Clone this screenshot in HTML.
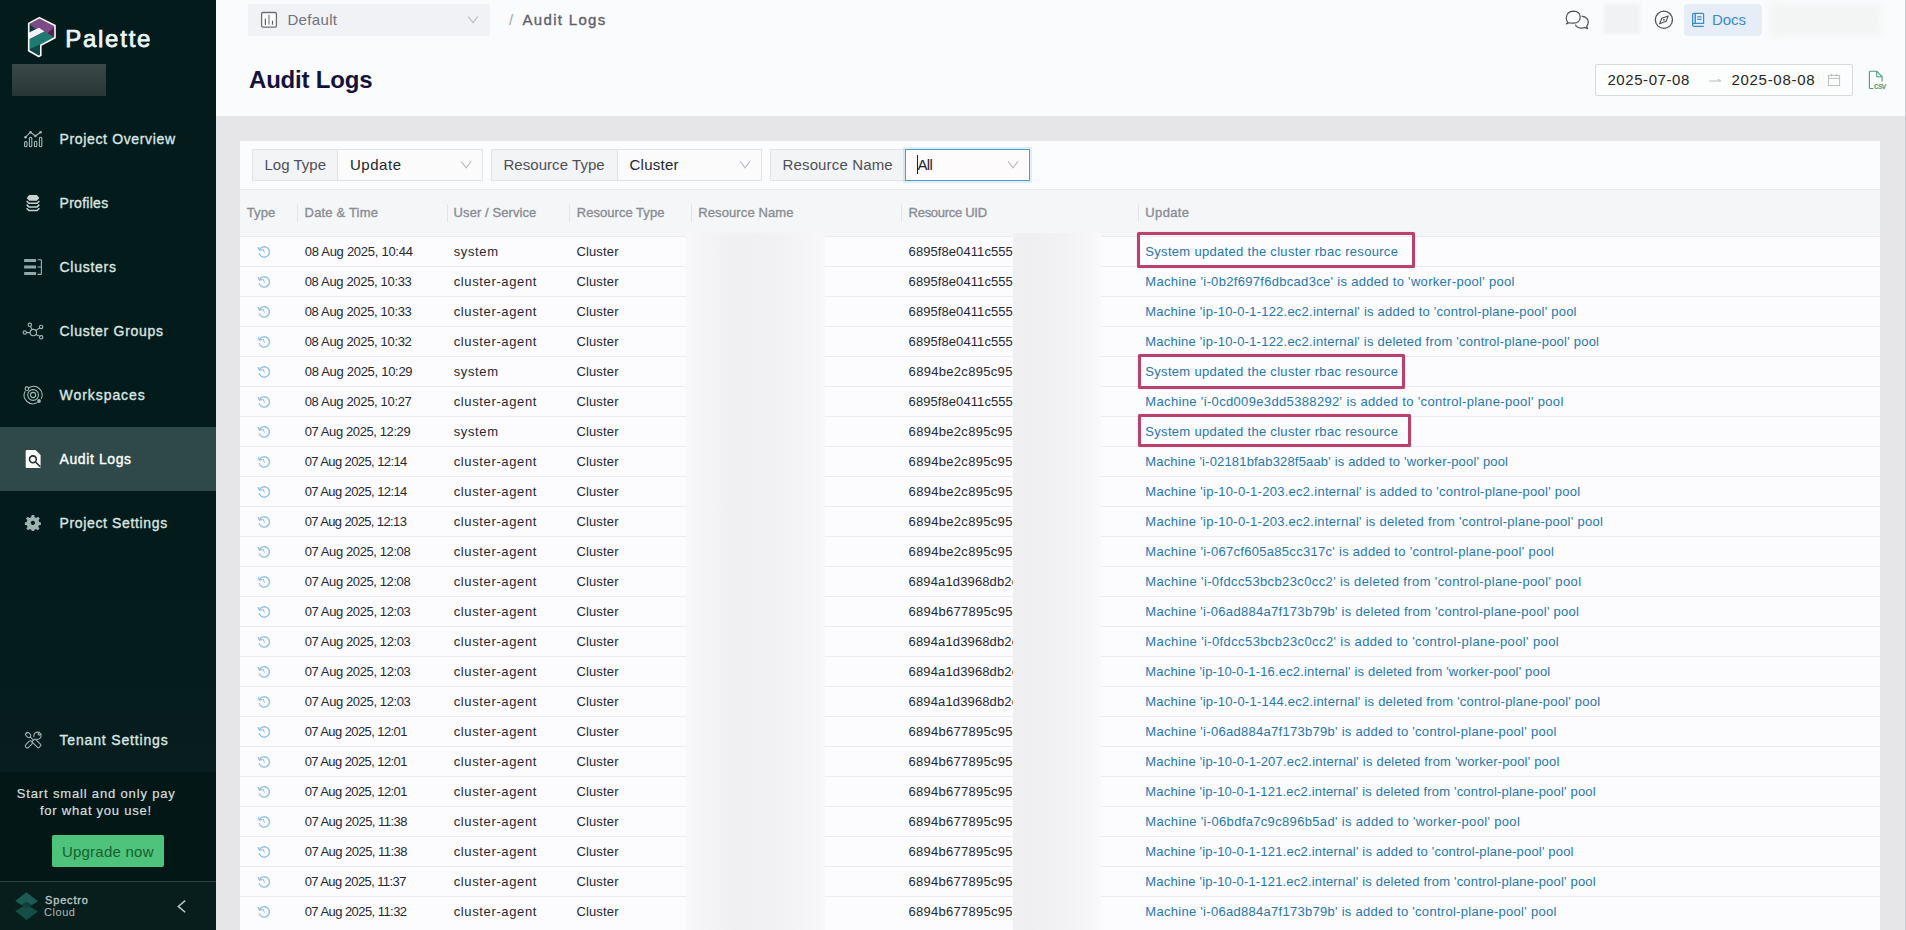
<!DOCTYPE html>
<html><head><meta charset="utf-8">
<style>
*{box-sizing:border-box;margin:0;padding:0}
html,body{width:1906px;height:930px;overflow:hidden;font-family:"Liberation Sans",sans-serif;background:#e6e6e9;position:relative}
.b{position:absolute}
.t{position:absolute;white-space:pre;line-height:1;font-family:"Liberation Sans",sans-serif}
svg{position:absolute}
.rl{position:absolute;left:240px;width:1640px;height:1px;background:#ececef}
</style></head><body>
<!-- sidebar -->
<div class="b" style="left:0;top:0;width:216px;height:930px;background:#031b1a"></div>
<div class="b" style="left:0;top:540px;width:216px;height:232px;background:linear-gradient(180deg,#031b1a 0%,#051c1c 50%,#081e1e 100%)"></div>
<div class="b" style="left:0;top:772px;width:216px;height:109px;background:#021716"></div>
<div class="b" style="left:0;top:881px;width:216px;height:1px;background:#2c4142"></div>
<div class="b" style="left:0;top:882px;width:216px;height:48px;background:#071e1d"></div>
<div class="b" style="left:0;top:427px;width:216px;height:64px;background:#2f4949"></div>
<div class="b" style="left:12px;top:64px;width:94px;height:32px;background:linear-gradient(180deg,#3a4848,#283636);filter:blur(0.6px)"></div>
<div class="b" style="left:52px;top:835px;width:112px;height:32px;background:#4ec37b;border-radius:2px"></div>

<!-- header -->
<div class="b" style="left:216px;top:0;width:1690px;height:116px;background:#fafbfc"></div>
<div class="b" style="left:248px;top:4px;width:242px;height:32px;background:#f0f2f5"></div>
<div class="b" style="left:1604px;top:4px;width:36px;height:30px;background:#f0f2f3;filter:blur(1.5px)"></div>
<div class="b" style="left:1684px;top:4px;width:78px;height:32px;background:#e6edf7;border-radius:4px"></div>
<div class="b" style="left:1770px;top:4px;width:112px;height:32px;background:#f3f4f4;filter:blur(3px)"></div>
<div class="b" style="left:1595px;top:64px;width:258px;height:32px;background:#fcfdfd;border:1px solid #d6d9dd;border-radius:2px"></div>
<div class="b" style="left:1905px;top:0;width:1px;height:930px;background:#c9cacd"></div>

<!-- card -->
<div class="b" style="left:240px;top:141px;width:1640px;height:789px;background:#fcfcfe"></div>
<div class="b" style="left:240px;top:141px;width:1640px;height:48px;background:#fbfcfd"></div>
<div class="b" style="left:240px;top:189px;width:1640px;height:1px;background:#e7e8eb"></div>
<div class="b" style="left:240px;top:190px;width:1640px;height:46px;background:#f5f6f8"></div>
<!-- filter groups -->
<div class="b" style="left:252px;top:149px;width:231px;height:32px;border:1px solid #e2e3e6;background:#fbfbfc"></div>
<div class="b" style="left:253px;top:150px;width:85px;height:30px;background:#f3f4f6;border-right:1px solid #e2e3e6"></div>
<div class="b" style="left:491px;top:149px;width:271px;height:32px;border:1px solid #e2e3e6;background:#fbfbfc"></div>
<div class="b" style="left:492px;top:150px;width:126px;height:30px;background:#f3f4f6;border-right:1px solid #e2e3e6"></div>
<div class="b" style="left:770px;top:149px;width:260px;height:32px;border:1px solid #e2e3e6;background:#fbfbfc"></div>
<div class="b" style="left:771px;top:150px;width:134px;height:30px;background:#f3f4f6"></div>
<div class="b" style="left:905px;top:149px;width:125px;height:32px;border:1px solid #4a9bd6;background:#fdfbfb;box-shadow:0 0 0 2px rgba(74,155,214,0.15)"></div>
<div class="b" style="left:917px;top:155px;width:1.2px;height:19px;background:#222"></div>
<!-- header separators -->
<div class="b" style="left:297px;top:204px;width:1px;height:18px;background:#e3e4e7"></div>
<div class="b" style="left:447px;top:204px;width:1px;height:18px;background:#e3e4e7"></div>
<div class="b" style="left:569px;top:204px;width:1px;height:18px;background:#e3e4e7"></div>
<div class="b" style="left:691px;top:204px;width:1px;height:18px;background:#e3e4e7"></div>
<div class="b" style="left:901px;top:204px;width:1px;height:18px;background:#e3e4e7"></div>
<div class="b" style="left:1138px;top:204px;width:1px;height:18px;background:#e3e4e7"></div>
<div class="b" style="left:240px;top:236px;width:1640px;height:1px;background:#e9eaed"></div>

<div class='t' style='left:65.2px;top:26.5px;font-size:24px;font-weight:400;-webkit-text-stroke:0.75px #eef7f6;color:#eef7f6;letter-spacing:1.747px;'>Palette</div>
<div class='t' style='left:59.5px;top:132.1px;font-size:14px;font-weight:400;-webkit-text-stroke:0.35px #dae5e2;color:#dae5e2;letter-spacing:0.646px;'>Project Overview</div>
<div class='t' style='left:59.5px;top:196.1px;font-size:14px;font-weight:400;-webkit-text-stroke:0.35px #dae5e2;color:#dae5e2;letter-spacing:0.288px;'>Profiles</div>
<div class='t' style='left:59.5px;top:260.1px;font-size:14px;font-weight:400;-webkit-text-stroke:0.35px #dae5e2;color:#dae5e2;letter-spacing:0.720px;'>Clusters</div>
<div class='t' style='left:59.5px;top:324.1px;font-size:14px;font-weight:400;-webkit-text-stroke:0.35px #dae5e2;color:#dae5e2;letter-spacing:0.726px;'>Cluster Groups</div>
<div class='t' style='left:59.5px;top:388.1px;font-size:14px;font-weight:400;-webkit-text-stroke:0.35px #dae5e2;color:#dae5e2;letter-spacing:0.947px;'>Workspaces</div>
<div class='t' style='left:59.5px;top:452.1px;font-size:14px;font-weight:400;-webkit-text-stroke:0.35px #ffffff;color:#ffffff;letter-spacing:0.603px;'>Audit Logs</div>
<div class='t' style='left:59.5px;top:516.1px;font-size:14px;font-weight:400;-webkit-text-stroke:0.35px #dae5e2;color:#dae5e2;letter-spacing:0.643px;'>Project Settings</div>
<div class='t' style='left:59.5px;top:733.3px;font-size:14px;font-weight:400;-webkit-text-stroke:0.35px #dae5e2;color:#dae5e2;letter-spacing:0.835px;'>Tenant Settings</div>
<div class='t' style='left:16.8px;top:786.6px;font-size:13px;font-weight:400;-webkit-text-stroke:0.2px #d4dedc;color:#d4dedc;letter-spacing:0.838px;'>Start small and only pay</div>
<div class='t' style='left:40.0px;top:804.2px;font-size:13px;font-weight:400;-webkit-text-stroke:0.2px #d4dedc;color:#d4dedc;letter-spacing:0.750px;'>for what you use!</div>
<div class='t' style='left:61.9px;top:843.9px;font-size:15px;font-weight:400;color:#17602f;letter-spacing:0.237px;'>Upgrade now</div>
<div class='t' style='left:45.0px;top:895.3px;font-size:11px;font-weight:400;-webkit-text-stroke:0.35px #b9c7c5;color:#b9c7c5;letter-spacing:0.846px;'>Spectro</div>
<div class='t' style='left:44.0px;top:906.7px;font-size:11px;font-weight:400;color:#aebbb9;letter-spacing:0.562px;'>Cloud</div>
<div class='t' style='left:287.4px;top:12.2px;font-size:15px;font-weight:400;color:#6f737d;letter-spacing:0.345px;'>Default</div>
<div class='t' style='left:509.0px;top:12.1px;font-size:15px;font-weight:400;color:#a3a6ad;letter-spacing:0.000px;'>/</div>
<div class='t' style='left:522.5px;top:11.9px;font-size:15px;font-weight:400;-webkit-text-stroke:0.35px #5c606b;color:#5c606b;letter-spacing:1.312px;'>Audit Logs</div>
<div class='t' style='left:249.0px;top:67.7px;font-size:24px;font-weight:700;color:#14123a;letter-spacing:-0.201px;'>Audit Logs</div>
<div class='t' style='left:1712.0px;top:12.1px;font-size:15px;font-weight:400;color:#3a8bc9;letter-spacing:-0.062px;'>Docs</div>
<div class='t' style='left:1607.4px;top:71.8px;font-size:15px;font-weight:400;color:#262626;letter-spacing:0.585px;'>2025-07-08</div>
<div class='t' style='left:1731.4px;top:71.8px;font-size:15px;font-weight:400;color:#262626;letter-spacing:0.718px;'>2025-08-08</div>
<div class='t' style='left:264.5px;top:157.1px;font-size:15px;font-weight:400;color:#4e5059;letter-spacing:0.007px;'>Log Type</div>
<div class='t' style='left:350.0px;top:157.1px;font-size:15px;font-weight:400;color:#22242e;letter-spacing:0.525px;'>Update</div>
<div class='t' style='left:503.4px;top:157.1px;font-size:15px;font-weight:400;color:#4e5059;letter-spacing:0.056px;'>Resource Type</div>
<div class='t' style='left:629.5px;top:157.1px;font-size:15px;font-weight:400;color:#22242e;letter-spacing:0.247px;'>Cluster</div>
<div class='t' style='left:782.5px;top:157.1px;font-size:15px;font-weight:400;color:#4e5059;letter-spacing:0.151px;'>Resource Name</div>
<div class='t' style='left:917.5px;top:157.1px;font-size:15px;font-weight:400;color:#22242e;letter-spacing:-0.636px;'>All</div>
<div class='t' style='left:246.7px;top:206.3px;font-size:13px;font-weight:400;-webkit-text-stroke:0.35px #8a8c94;color:#8a8c94;letter-spacing:0.138px;'>Type</div>
<div class='t' style='left:304.6px;top:206.3px;font-size:13px;font-weight:400;-webkit-text-stroke:0.35px #8a8c94;color:#8a8c94;letter-spacing:0.177px;'>Date &amp; Time</div>
<div class='t' style='left:453.6px;top:206.3px;font-size:13px;font-weight:400;-webkit-text-stroke:0.35px #8a8c94;color:#8a8c94;letter-spacing:0.081px;'>User / Service</div>
<div class='t' style='left:576.8px;top:206.3px;font-size:13px;font-weight:400;-webkit-text-stroke:0.35px #8a8c94;color:#8a8c94;letter-spacing:0.033px;'>Resource Type</div>
<div class='t' style='left:698.3px;top:206.3px;font-size:13px;font-weight:400;-webkit-text-stroke:0.35px #8a8c94;color:#8a8c94;letter-spacing:0.097px;'>Resource Name</div>
<div class='t' style='left:908.6px;top:206.3px;font-size:13px;font-weight:400;-webkit-text-stroke:0.35px #8a8c94;color:#8a8c94;letter-spacing:-0.286px;'>Resource UID</div>
<div class='t' style='left:1145.3px;top:206.3px;font-size:13px;font-weight:400;-webkit-text-stroke:0.35px #8a8c94;color:#8a8c94;letter-spacing:0.356px;'>Update</div>
<div class='rl' style='top:236px'></div>
<svg class='hist' style='left:257px;top:245px' width='14' height='14' viewBox='0 0 14 14'><path d='M2.6 4.6 A5.2 5.2 0 1 1 2.3 8.6' fill='none' stroke='#8fbde3' stroke-width='1.3' stroke-linecap='round'/><path d='M1.4 2.6 L2.4 5.2 L5 4.6' fill='none' stroke='#8fbde3' stroke-width='1.3' stroke-linecap='round' stroke-linejoin='round'/><path d='M6.2 4.4 L7.4 7.4' stroke='#8fbde3' stroke-width='1' stroke-linecap='round'/></svg>
<div class='t' style='left:304.7px;top:245.0px;font-size:13px;color:#262833;letter-spacing:-0.269px;'>08 Aug 2025, 10:44</div>
<div class='t' style='left:453.7px;top:245.0px;font-size:13px;color:#262833;letter-spacing:0.629px;'>system</div>
<div class='t' style='left:576.4px;top:245.0px;font-size:13px;color:#262833;letter-spacing:0.152px;'>Cluster</div>
<div class='t' style='left:908.6px;top:245.0px;font-size:13px;color:#262833;letter-spacing:0.076px;width:104.4px;overflow:hidden'>6895f8e0411c5559</div>
<div class='t' style='left:1145.3px;top:245.0px;font-size:13px;color:#2776ac;letter-spacing:0.307px;'>System updated the cluster rbac resource</div>
<div class='rl' style='top:266px'></div>
<svg class='hist' style='left:257px;top:275px' width='14' height='14' viewBox='0 0 14 14'><path d='M2.6 4.6 A5.2 5.2 0 1 1 2.3 8.6' fill='none' stroke='#8fbde3' stroke-width='1.3' stroke-linecap='round'/><path d='M1.4 2.6 L2.4 5.2 L5 4.6' fill='none' stroke='#8fbde3' stroke-width='1.3' stroke-linecap='round' stroke-linejoin='round'/><path d='M6.2 4.4 L7.4 7.4' stroke='#8fbde3' stroke-width='1' stroke-linecap='round'/></svg>
<div class='t' style='left:304.7px;top:275.0px;font-size:13px;color:#262833;letter-spacing:-0.334px;'>08 Aug 2025, 10:33</div>
<div class='t' style='left:453.7px;top:275.0px;font-size:13px;color:#262833;letter-spacing:0.629px;'>cluster-agent</div>
<div class='t' style='left:576.4px;top:275.0px;font-size:13px;color:#262833;letter-spacing:0.152px;'>Cluster</div>
<div class='t' style='left:908.6px;top:275.0px;font-size:13px;color:#262833;letter-spacing:0.076px;width:104.4px;overflow:hidden'>6895f8e0411c5559</div>
<div class='t' style='left:1145.3px;top:275.0px;font-size:13px;color:#2776ac;letter-spacing:0.306px;'>Machine &#x27;i-0b2f697f6dbcad3ce&#x27; is added to &#x27;worker-pool&#x27; pool</div>
<div class='rl' style='top:296px'></div>
<svg class='hist' style='left:257px;top:305px' width='14' height='14' viewBox='0 0 14 14'><path d='M2.6 4.6 A5.2 5.2 0 1 1 2.3 8.6' fill='none' stroke='#8fbde3' stroke-width='1.3' stroke-linecap='round'/><path d='M1.4 2.6 L2.4 5.2 L5 4.6' fill='none' stroke='#8fbde3' stroke-width='1.3' stroke-linecap='round' stroke-linejoin='round'/><path d='M6.2 4.4 L7.4 7.4' stroke='#8fbde3' stroke-width='1' stroke-linecap='round'/></svg>
<div class='t' style='left:304.7px;top:305.0px;font-size:13px;color:#262833;letter-spacing:-0.334px;'>08 Aug 2025, 10:33</div>
<div class='t' style='left:453.7px;top:305.0px;font-size:13px;color:#262833;letter-spacing:0.629px;'>cluster-agent</div>
<div class='t' style='left:576.4px;top:305.0px;font-size:13px;color:#262833;letter-spacing:0.152px;'>Cluster</div>
<div class='t' style='left:908.6px;top:305.0px;font-size:13px;color:#262833;letter-spacing:0.076px;width:104.4px;overflow:hidden'>6895f8e0411c5559</div>
<div class='t' style='left:1145.3px;top:305.0px;font-size:13px;color:#2776ac;letter-spacing:0.227px;'>Machine &#x27;ip-10-0-1-122.ec2.internal&#x27; is added to &#x27;control-plane-pool&#x27; pool</div>
<div class='rl' style='top:326px'></div>
<svg class='hist' style='left:257px;top:335px' width='14' height='14' viewBox='0 0 14 14'><path d='M2.6 4.6 A5.2 5.2 0 1 1 2.3 8.6' fill='none' stroke='#8fbde3' stroke-width='1.3' stroke-linecap='round'/><path d='M1.4 2.6 L2.4 5.2 L5 4.6' fill='none' stroke='#8fbde3' stroke-width='1.3' stroke-linecap='round' stroke-linejoin='round'/><path d='M6.2 4.4 L7.4 7.4' stroke='#8fbde3' stroke-width='1' stroke-linecap='round'/></svg>
<div class='t' style='left:304.7px;top:335.0px;font-size:13px;color:#262833;letter-spacing:-0.334px;'>08 Aug 2025, 10:32</div>
<div class='t' style='left:453.7px;top:335.0px;font-size:13px;color:#262833;letter-spacing:0.629px;'>cluster-agent</div>
<div class='t' style='left:576.4px;top:335.0px;font-size:13px;color:#262833;letter-spacing:0.152px;'>Cluster</div>
<div class='t' style='left:908.6px;top:335.0px;font-size:13px;color:#262833;letter-spacing:0.076px;width:104.4px;overflow:hidden'>6895f8e0411c5559</div>
<div class='t' style='left:1145.3px;top:335.0px;font-size:13px;color:#2776ac;letter-spacing:0.226px;'>Machine &#x27;ip-10-0-1-122.ec2.internal&#x27; is deleted from &#x27;control-plane-pool&#x27; pool</div>
<div class='rl' style='top:356px'></div>
<svg class='hist' style='left:257px;top:365px' width='14' height='14' viewBox='0 0 14 14'><path d='M2.6 4.6 A5.2 5.2 0 1 1 2.3 8.6' fill='none' stroke='#8fbde3' stroke-width='1.3' stroke-linecap='round'/><path d='M1.4 2.6 L2.4 5.2 L5 4.6' fill='none' stroke='#8fbde3' stroke-width='1.3' stroke-linecap='round' stroke-linejoin='round'/><path d='M6.2 4.4 L7.4 7.4' stroke='#8fbde3' stroke-width='1' stroke-linecap='round'/></svg>
<div class='t' style='left:304.7px;top:365.0px;font-size:13px;color:#262833;letter-spacing:-0.287px;'>08 Aug 2025, 10:29</div>
<div class='t' style='left:453.7px;top:365.0px;font-size:13px;color:#262833;letter-spacing:0.629px;'>system</div>
<div class='t' style='left:576.4px;top:365.0px;font-size:13px;color:#262833;letter-spacing:0.152px;'>Cluster</div>
<div class='t' style='left:908.6px;top:365.0px;font-size:13px;color:#262833;letter-spacing:0.310px;width:104.4px;overflow:hidden'>6894be2c895c95a</div>
<div class='t' style='left:1145.3px;top:365.0px;font-size:13px;color:#2776ac;letter-spacing:0.307px;'>System updated the cluster rbac resource</div>
<div class='rl' style='top:386px'></div>
<svg class='hist' style='left:257px;top:395px' width='14' height='14' viewBox='0 0 14 14'><path d='M2.6 4.6 A5.2 5.2 0 1 1 2.3 8.6' fill='none' stroke='#8fbde3' stroke-width='1.3' stroke-linecap='round'/><path d='M1.4 2.6 L2.4 5.2 L5 4.6' fill='none' stroke='#8fbde3' stroke-width='1.3' stroke-linecap='round' stroke-linejoin='round'/><path d='M6.2 4.4 L7.4 7.4' stroke='#8fbde3' stroke-width='1' stroke-linecap='round'/></svg>
<div class='t' style='left:304.7px;top:395.0px;font-size:13px;color:#262833;letter-spacing:-0.334px;'>08 Aug 2025, 10:27</div>
<div class='t' style='left:453.7px;top:395.0px;font-size:13px;color:#262833;letter-spacing:0.629px;'>cluster-agent</div>
<div class='t' style='left:576.4px;top:395.0px;font-size:13px;color:#262833;letter-spacing:0.152px;'>Cluster</div>
<div class='t' style='left:908.6px;top:395.0px;font-size:13px;color:#262833;letter-spacing:0.076px;width:104.4px;overflow:hidden'>6895f8e0411c5559</div>
<div class='t' style='left:1145.3px;top:395.0px;font-size:13px;color:#2776ac;letter-spacing:0.346px;'>Machine &#x27;i-0cd009e3dd5388292&#x27; is added to &#x27;control-plane-pool&#x27; pool</div>
<div class='rl' style='top:416px'></div>
<svg class='hist' style='left:257px;top:425px' width='14' height='14' viewBox='0 0 14 14'><path d='M2.6 4.6 A5.2 5.2 0 1 1 2.3 8.6' fill='none' stroke='#8fbde3' stroke-width='1.3' stroke-linecap='round'/><path d='M1.4 2.6 L2.4 5.2 L5 4.6' fill='none' stroke='#8fbde3' stroke-width='1.3' stroke-linecap='round' stroke-linejoin='round'/><path d='M6.2 4.4 L7.4 7.4' stroke='#8fbde3' stroke-width='1' stroke-linecap='round'/></svg>
<div class='t' style='left:304.7px;top:425.0px;font-size:13px;color:#262833;letter-spacing:-0.399px;'>07 Aug 2025, 12:29</div>
<div class='t' style='left:453.7px;top:425.0px;font-size:13px;color:#262833;letter-spacing:0.629px;'>system</div>
<div class='t' style='left:576.4px;top:425.0px;font-size:13px;color:#262833;letter-spacing:0.152px;'>Cluster</div>
<div class='t' style='left:908.6px;top:425.0px;font-size:13px;color:#262833;letter-spacing:0.310px;width:104.4px;overflow:hidden'>6894be2c895c95a</div>
<div class='t' style='left:1145.3px;top:425.0px;font-size:13px;color:#2776ac;letter-spacing:0.307px;'>System updated the cluster rbac resource</div>
<div class='rl' style='top:446px'></div>
<svg class='hist' style='left:257px;top:455px' width='14' height='14' viewBox='0 0 14 14'><path d='M2.6 4.6 A5.2 5.2 0 1 1 2.3 8.6' fill='none' stroke='#8fbde3' stroke-width='1.3' stroke-linecap='round'/><path d='M1.4 2.6 L2.4 5.2 L5 4.6' fill='none' stroke='#8fbde3' stroke-width='1.3' stroke-linecap='round' stroke-linejoin='round'/><path d='M6.2 4.4 L7.4 7.4' stroke='#8fbde3' stroke-width='1' stroke-linecap='round'/></svg>
<div class='t' style='left:304.7px;top:455.0px;font-size:13px;color:#262833;letter-spacing:-0.599px;'>07 Aug 2025, 12:14</div>
<div class='t' style='left:453.7px;top:455.0px;font-size:13px;color:#262833;letter-spacing:0.629px;'>cluster-agent</div>
<div class='t' style='left:576.4px;top:455.0px;font-size:13px;color:#262833;letter-spacing:0.152px;'>Cluster</div>
<div class='t' style='left:908.6px;top:455.0px;font-size:13px;color:#262833;letter-spacing:0.310px;width:104.4px;overflow:hidden'>6894be2c895c95a</div>
<div class='t' style='left:1145.3px;top:455.0px;font-size:13px;color:#2776ac;letter-spacing:0.173px;'>Machine &#x27;i-02181bfab328f5aab&#x27; is added to &#x27;worker-pool&#x27; pool</div>
<div class='rl' style='top:476px'></div>
<svg class='hist' style='left:257px;top:485px' width='14' height='14' viewBox='0 0 14 14'><path d='M2.6 4.6 A5.2 5.2 0 1 1 2.3 8.6' fill='none' stroke='#8fbde3' stroke-width='1.3' stroke-linecap='round'/><path d='M1.4 2.6 L2.4 5.2 L5 4.6' fill='none' stroke='#8fbde3' stroke-width='1.3' stroke-linecap='round' stroke-linejoin='round'/><path d='M6.2 4.4 L7.4 7.4' stroke='#8fbde3' stroke-width='1' stroke-linecap='round'/></svg>
<div class='t' style='left:304.7px;top:485.0px;font-size:13px;color:#262833;letter-spacing:-0.599px;'>07 Aug 2025, 12:14</div>
<div class='t' style='left:453.7px;top:485.0px;font-size:13px;color:#262833;letter-spacing:0.629px;'>cluster-agent</div>
<div class='t' style='left:576.4px;top:485.0px;font-size:13px;color:#262833;letter-spacing:0.152px;'>Cluster</div>
<div class='t' style='left:908.6px;top:485.0px;font-size:13px;color:#262833;letter-spacing:0.310px;width:104.4px;overflow:hidden'>6894be2c895c95a</div>
<div class='t' style='left:1145.3px;top:485.0px;font-size:13px;color:#2776ac;letter-spacing:0.278px;'>Machine &#x27;ip-10-0-1-203.ec2.internal&#x27; is added to &#x27;control-plane-pool&#x27; pool</div>
<div class='rl' style='top:506px'></div>
<svg class='hist' style='left:257px;top:515px' width='14' height='14' viewBox='0 0 14 14'><path d='M2.6 4.6 A5.2 5.2 0 1 1 2.3 8.6' fill='none' stroke='#8fbde3' stroke-width='1.3' stroke-linecap='round'/><path d='M1.4 2.6 L2.4 5.2 L5 4.6' fill='none' stroke='#8fbde3' stroke-width='1.3' stroke-linecap='round' stroke-linejoin='round'/><path d='M6.2 4.4 L7.4 7.4' stroke='#8fbde3' stroke-width='1' stroke-linecap='round'/></svg>
<div class='t' style='left:304.7px;top:515.0px;font-size:13px;color:#262833;letter-spacing:-0.622px;'>07 Aug 2025, 12:13</div>
<div class='t' style='left:453.7px;top:515.0px;font-size:13px;color:#262833;letter-spacing:0.629px;'>cluster-agent</div>
<div class='t' style='left:576.4px;top:515.0px;font-size:13px;color:#262833;letter-spacing:0.152px;'>Cluster</div>
<div class='t' style='left:908.6px;top:515.0px;font-size:13px;color:#262833;letter-spacing:0.310px;width:104.4px;overflow:hidden'>6894be2c895c95a</div>
<div class='t' style='left:1145.3px;top:515.0px;font-size:13px;color:#2776ac;letter-spacing:0.276px;'>Machine &#x27;ip-10-0-1-203.ec2.internal&#x27; is deleted from &#x27;control-plane-pool&#x27; pool</div>
<div class='rl' style='top:536px'></div>
<svg class='hist' style='left:257px;top:545px' width='14' height='14' viewBox='0 0 14 14'><path d='M2.6 4.6 A5.2 5.2 0 1 1 2.3 8.6' fill='none' stroke='#8fbde3' stroke-width='1.3' stroke-linecap='round'/><path d='M1.4 2.6 L2.4 5.2 L5 4.6' fill='none' stroke='#8fbde3' stroke-width='1.3' stroke-linecap='round' stroke-linejoin='round'/><path d='M6.2 4.4 L7.4 7.4' stroke='#8fbde3' stroke-width='1' stroke-linecap='round'/></svg>
<div class='t' style='left:304.7px;top:545.0px;font-size:13px;color:#262833;letter-spacing:-0.399px;'>07 Aug 2025, 12:08</div>
<div class='t' style='left:453.7px;top:545.0px;font-size:13px;color:#262833;letter-spacing:0.629px;'>cluster-agent</div>
<div class='t' style='left:576.4px;top:545.0px;font-size:13px;color:#262833;letter-spacing:0.152px;'>Cluster</div>
<div class='t' style='left:908.6px;top:545.0px;font-size:13px;color:#262833;letter-spacing:0.310px;width:104.4px;overflow:hidden'>6894be2c895c95a</div>
<div class='t' style='left:1145.3px;top:545.0px;font-size:13px;color:#2776ac;letter-spacing:0.292px;'>Machine &#x27;i-067cf605a85cc317c&#x27; is added to &#x27;control-plane-pool&#x27; pool</div>
<div class='rl' style='top:566px'></div>
<svg class='hist' style='left:257px;top:575px' width='14' height='14' viewBox='0 0 14 14'><path d='M2.6 4.6 A5.2 5.2 0 1 1 2.3 8.6' fill='none' stroke='#8fbde3' stroke-width='1.3' stroke-linecap='round'/><path d='M1.4 2.6 L2.4 5.2 L5 4.6' fill='none' stroke='#8fbde3' stroke-width='1.3' stroke-linecap='round' stroke-linejoin='round'/><path d='M6.2 4.4 L7.4 7.4' stroke='#8fbde3' stroke-width='1' stroke-linecap='round'/></svg>
<div class='t' style='left:304.7px;top:575.0px;font-size:13px;color:#262833;letter-spacing:-0.399px;'>07 Aug 2025, 12:08</div>
<div class='t' style='left:453.7px;top:575.0px;font-size:13px;color:#262833;letter-spacing:0.629px;'>cluster-agent</div>
<div class='t' style='left:576.4px;top:575.0px;font-size:13px;color:#262833;letter-spacing:0.152px;'>Cluster</div>
<div class='t' style='left:908.6px;top:575.0px;font-size:13px;color:#262833;letter-spacing:0.136px;width:104.4px;overflow:hidden'>6894a1d3968db2e</div>
<div class='t' style='left:1145.3px;top:575.0px;font-size:13px;color:#2776ac;letter-spacing:0.374px;'>Machine &#x27;i-0fdcc53bcb23c0cc2&#x27; is deleted from &#x27;control-plane-pool&#x27; pool</div>
<div class='rl' style='top:596px'></div>
<svg class='hist' style='left:257px;top:605px' width='14' height='14' viewBox='0 0 14 14'><path d='M2.6 4.6 A5.2 5.2 0 1 1 2.3 8.6' fill='none' stroke='#8fbde3' stroke-width='1.3' stroke-linecap='round'/><path d='M1.4 2.6 L2.4 5.2 L5 4.6' fill='none' stroke='#8fbde3' stroke-width='1.3' stroke-linecap='round' stroke-linejoin='round'/><path d='M6.2 4.4 L7.4 7.4' stroke='#8fbde3' stroke-width='1' stroke-linecap='round'/></svg>
<div class='t' style='left:304.7px;top:605.0px;font-size:13px;color:#262833;letter-spacing:-0.393px;'>07 Aug 2025, 12:03</div>
<div class='t' style='left:453.7px;top:605.0px;font-size:13px;color:#262833;letter-spacing:0.629px;'>cluster-agent</div>
<div class='t' style='left:576.4px;top:605.0px;font-size:13px;color:#262833;letter-spacing:0.152px;'>Cluster</div>
<div class='t' style='left:908.6px;top:605.0px;font-size:13px;color:#262833;letter-spacing:0.269px;width:104.4px;overflow:hidden'>6894b677895c95a</div>
<div class='t' style='left:1145.3px;top:605.0px;font-size:13px;color:#2776ac;letter-spacing:0.282px;'>Machine &#x27;i-06ad884a7f173b79b&#x27; is deleted from &#x27;control-plane-pool&#x27; pool</div>
<div class='rl' style='top:626px'></div>
<svg class='hist' style='left:257px;top:635px' width='14' height='14' viewBox='0 0 14 14'><path d='M2.6 4.6 A5.2 5.2 0 1 1 2.3 8.6' fill='none' stroke='#8fbde3' stroke-width='1.3' stroke-linecap='round'/><path d='M1.4 2.6 L2.4 5.2 L5 4.6' fill='none' stroke='#8fbde3' stroke-width='1.3' stroke-linecap='round' stroke-linejoin='round'/><path d='M6.2 4.4 L7.4 7.4' stroke='#8fbde3' stroke-width='1' stroke-linecap='round'/></svg>
<div class='t' style='left:304.7px;top:635.0px;font-size:13px;color:#262833;letter-spacing:-0.393px;'>07 Aug 2025, 12:03</div>
<div class='t' style='left:453.7px;top:635.0px;font-size:13px;color:#262833;letter-spacing:0.629px;'>cluster-agent</div>
<div class='t' style='left:576.4px;top:635.0px;font-size:13px;color:#262833;letter-spacing:0.152px;'>Cluster</div>
<div class='t' style='left:908.6px;top:635.0px;font-size:13px;color:#262833;letter-spacing:0.136px;width:104.4px;overflow:hidden'>6894a1d3968db2e</div>
<div class='t' style='left:1145.3px;top:635.0px;font-size:13px;color:#2776ac;letter-spacing:0.387px;'>Machine &#x27;i-0fdcc53bcb23c0cc2&#x27; is added to &#x27;control-plane-pool&#x27; pool</div>
<div class='rl' style='top:656px'></div>
<svg class='hist' style='left:257px;top:665px' width='14' height='14' viewBox='0 0 14 14'><path d='M2.6 4.6 A5.2 5.2 0 1 1 2.3 8.6' fill='none' stroke='#8fbde3' stroke-width='1.3' stroke-linecap='round'/><path d='M1.4 2.6 L2.4 5.2 L5 4.6' fill='none' stroke='#8fbde3' stroke-width='1.3' stroke-linecap='round' stroke-linejoin='round'/><path d='M6.2 4.4 L7.4 7.4' stroke='#8fbde3' stroke-width='1' stroke-linecap='round'/></svg>
<div class='t' style='left:304.7px;top:665.0px;font-size:13px;color:#262833;letter-spacing:-0.393px;'>07 Aug 2025, 12:03</div>
<div class='t' style='left:453.7px;top:665.0px;font-size:13px;color:#262833;letter-spacing:0.629px;'>cluster-agent</div>
<div class='t' style='left:576.4px;top:665.0px;font-size:13px;color:#262833;letter-spacing:0.152px;'>Cluster</div>
<div class='t' style='left:908.6px;top:665.0px;font-size:13px;color:#262833;letter-spacing:0.136px;width:104.4px;overflow:hidden'>6894a1d3968db2e</div>
<div class='t' style='left:1145.3px;top:665.0px;font-size:13px;color:#2776ac;letter-spacing:0.174px;'>Machine &#x27;ip-10-0-1-16.ec2.internal&#x27; is deleted from &#x27;worker-pool&#x27; pool</div>
<div class='rl' style='top:686px'></div>
<svg class='hist' style='left:257px;top:695px' width='14' height='14' viewBox='0 0 14 14'><path d='M2.6 4.6 A5.2 5.2 0 1 1 2.3 8.6' fill='none' stroke='#8fbde3' stroke-width='1.3' stroke-linecap='round'/><path d='M1.4 2.6 L2.4 5.2 L5 4.6' fill='none' stroke='#8fbde3' stroke-width='1.3' stroke-linecap='round' stroke-linejoin='round'/><path d='M6.2 4.4 L7.4 7.4' stroke='#8fbde3' stroke-width='1' stroke-linecap='round'/></svg>
<div class='t' style='left:304.7px;top:695.0px;font-size:13px;color:#262833;letter-spacing:-0.393px;'>07 Aug 2025, 12:03</div>
<div class='t' style='left:453.7px;top:695.0px;font-size:13px;color:#262833;letter-spacing:0.629px;'>cluster-agent</div>
<div class='t' style='left:576.4px;top:695.0px;font-size:13px;color:#262833;letter-spacing:0.152px;'>Cluster</div>
<div class='t' style='left:908.6px;top:695.0px;font-size:13px;color:#262833;letter-spacing:0.136px;width:104.4px;overflow:hidden'>6894a1d3968db2e</div>
<div class='t' style='left:1145.3px;top:695.0px;font-size:13px;color:#2776ac;letter-spacing:0.241px;'>Machine &#x27;ip-10-0-1-144.ec2.internal&#x27; is deleted from &#x27;control-plane-pool&#x27; pool</div>
<div class='rl' style='top:716px'></div>
<svg class='hist' style='left:257px;top:725px' width='14' height='14' viewBox='0 0 14 14'><path d='M2.6 4.6 A5.2 5.2 0 1 1 2.3 8.6' fill='none' stroke='#8fbde3' stroke-width='1.3' stroke-linecap='round'/><path d='M1.4 2.6 L2.4 5.2 L5 4.6' fill='none' stroke='#8fbde3' stroke-width='1.3' stroke-linecap='round' stroke-linejoin='round'/><path d='M6.2 4.4 L7.4 7.4' stroke='#8fbde3' stroke-width='1' stroke-linecap='round'/></svg>
<div class='t' style='left:304.7px;top:725.0px;font-size:13px;color:#262833;letter-spacing:-0.587px;'>07 Aug 2025, 12:01</div>
<div class='t' style='left:453.7px;top:725.0px;font-size:13px;color:#262833;letter-spacing:0.629px;'>cluster-agent</div>
<div class='t' style='left:576.4px;top:725.0px;font-size:13px;color:#262833;letter-spacing:0.152px;'>Cluster</div>
<div class='t' style='left:908.6px;top:725.0px;font-size:13px;color:#262833;letter-spacing:0.269px;width:104.4px;overflow:hidden'>6894b677895c95a</div>
<div class='t' style='left:1145.3px;top:725.0px;font-size:13px;color:#2776ac;letter-spacing:0.285px;'>Machine &#x27;i-06ad884a7f173b79b&#x27; is added to &#x27;control-plane-pool&#x27; pool</div>
<div class='rl' style='top:746px'></div>
<svg class='hist' style='left:257px;top:755px' width='14' height='14' viewBox='0 0 14 14'><path d='M2.6 4.6 A5.2 5.2 0 1 1 2.3 8.6' fill='none' stroke='#8fbde3' stroke-width='1.3' stroke-linecap='round'/><path d='M1.4 2.6 L2.4 5.2 L5 4.6' fill='none' stroke='#8fbde3' stroke-width='1.3' stroke-linecap='round' stroke-linejoin='round'/><path d='M6.2 4.4 L7.4 7.4' stroke='#8fbde3' stroke-width='1' stroke-linecap='round'/></svg>
<div class='t' style='left:304.7px;top:755.0px;font-size:13px;color:#262833;letter-spacing:-0.587px;'>07 Aug 2025, 12:01</div>
<div class='t' style='left:453.7px;top:755.0px;font-size:13px;color:#262833;letter-spacing:0.629px;'>cluster-agent</div>
<div class='t' style='left:576.4px;top:755.0px;font-size:13px;color:#262833;letter-spacing:0.152px;'>Cluster</div>
<div class='t' style='left:908.6px;top:755.0px;font-size:13px;color:#262833;letter-spacing:0.269px;width:104.4px;overflow:hidden'>6894b677895c95a</div>
<div class='t' style='left:1145.3px;top:755.0px;font-size:13px;color:#2776ac;letter-spacing:0.199px;'>Machine &#x27;ip-10-0-1-207.ec2.internal&#x27; is deleted from &#x27;worker-pool&#x27; pool</div>
<div class='rl' style='top:776px'></div>
<svg class='hist' style='left:257px;top:785px' width='14' height='14' viewBox='0 0 14 14'><path d='M2.6 4.6 A5.2 5.2 0 1 1 2.3 8.6' fill='none' stroke='#8fbde3' stroke-width='1.3' stroke-linecap='round'/><path d='M1.4 2.6 L2.4 5.2 L5 4.6' fill='none' stroke='#8fbde3' stroke-width='1.3' stroke-linecap='round' stroke-linejoin='round'/><path d='M6.2 4.4 L7.4 7.4' stroke='#8fbde3' stroke-width='1' stroke-linecap='round'/></svg>
<div class='t' style='left:304.7px;top:785.0px;font-size:13px;color:#262833;letter-spacing:-0.587px;'>07 Aug 2025, 12:01</div>
<div class='t' style='left:453.7px;top:785.0px;font-size:13px;color:#262833;letter-spacing:0.629px;'>cluster-agent</div>
<div class='t' style='left:576.4px;top:785.0px;font-size:13px;color:#262833;letter-spacing:0.152px;'>Cluster</div>
<div class='t' style='left:908.6px;top:785.0px;font-size:13px;color:#262833;letter-spacing:0.269px;width:104.4px;overflow:hidden'>6894b677895c95a</div>
<div class='t' style='left:1145.3px;top:785.0px;font-size:13px;color:#2776ac;letter-spacing:0.182px;'>Machine &#x27;ip-10-0-1-121.ec2.internal&#x27; is deleted from &#x27;control-plane-pool&#x27; pool</div>
<div class='rl' style='top:806px'></div>
<svg class='hist' style='left:257px;top:815px' width='14' height='14' viewBox='0 0 14 14'><path d='M2.6 4.6 A5.2 5.2 0 1 1 2.3 8.6' fill='none' stroke='#8fbde3' stroke-width='1.3' stroke-linecap='round'/><path d='M1.4 2.6 L2.4 5.2 L5 4.6' fill='none' stroke='#8fbde3' stroke-width='1.3' stroke-linecap='round' stroke-linejoin='round'/><path d='M6.2 4.4 L7.4 7.4' stroke='#8fbde3' stroke-width='1' stroke-linecap='round'/></svg>
<div class='t' style='left:304.7px;top:815.0px;font-size:13px;color:#262833;letter-spacing:-0.530px;'>07 Aug 2025, 11:38</div>
<div class='t' style='left:453.7px;top:815.0px;font-size:13px;color:#262833;letter-spacing:0.629px;'>cluster-agent</div>
<div class='t' style='left:576.4px;top:815.0px;font-size:13px;color:#262833;letter-spacing:0.152px;'>Cluster</div>
<div class='t' style='left:908.6px;top:815.0px;font-size:13px;color:#262833;letter-spacing:0.269px;width:104.4px;overflow:hidden'>6894b677895c95a</div>
<div class='t' style='left:1145.3px;top:815.0px;font-size:13px;color:#2776ac;letter-spacing:0.336px;'>Machine &#x27;i-06bdfa7c9c896b5ad&#x27; is added to &#x27;worker-pool&#x27; pool</div>
<div class='rl' style='top:836px'></div>
<svg class='hist' style='left:257px;top:845px' width='14' height='14' viewBox='0 0 14 14'><path d='M2.6 4.6 A5.2 5.2 0 1 1 2.3 8.6' fill='none' stroke='#8fbde3' stroke-width='1.3' stroke-linecap='round'/><path d='M1.4 2.6 L2.4 5.2 L5 4.6' fill='none' stroke='#8fbde3' stroke-width='1.3' stroke-linecap='round' stroke-linejoin='round'/><path d='M6.2 4.4 L7.4 7.4' stroke='#8fbde3' stroke-width='1' stroke-linecap='round'/></svg>
<div class='t' style='left:304.7px;top:845.0px;font-size:13px;color:#262833;letter-spacing:-0.530px;'>07 Aug 2025, 11:38</div>
<div class='t' style='left:453.7px;top:845.0px;font-size:13px;color:#262833;letter-spacing:0.629px;'>cluster-agent</div>
<div class='t' style='left:576.4px;top:845.0px;font-size:13px;color:#262833;letter-spacing:0.152px;'>Cluster</div>
<div class='t' style='left:908.6px;top:845.0px;font-size:13px;color:#262833;letter-spacing:0.269px;width:104.4px;overflow:hidden'>6894b677895c95a</div>
<div class='t' style='left:1145.3px;top:845.0px;font-size:13px;color:#2776ac;letter-spacing:0.186px;'>Machine &#x27;ip-10-0-1-121.ec2.internal&#x27; is added to &#x27;control-plane-pool&#x27; pool</div>
<div class='rl' style='top:866px'></div>
<svg class='hist' style='left:257px;top:875px' width='14' height='14' viewBox='0 0 14 14'><path d='M2.6 4.6 A5.2 5.2 0 1 1 2.3 8.6' fill='none' stroke='#8fbde3' stroke-width='1.3' stroke-linecap='round'/><path d='M1.4 2.6 L2.4 5.2 L5 4.6' fill='none' stroke='#8fbde3' stroke-width='1.3' stroke-linecap='round' stroke-linejoin='round'/><path d='M6.2 4.4 L7.4 7.4' stroke='#8fbde3' stroke-width='1' stroke-linecap='round'/></svg>
<div class='t' style='left:304.7px;top:875.0px;font-size:13px;color:#262833;letter-spacing:-0.595px;'>07 Aug 2025, 11:37</div>
<div class='t' style='left:453.7px;top:875.0px;font-size:13px;color:#262833;letter-spacing:0.629px;'>cluster-agent</div>
<div class='t' style='left:576.4px;top:875.0px;font-size:13px;color:#262833;letter-spacing:0.152px;'>Cluster</div>
<div class='t' style='left:908.6px;top:875.0px;font-size:13px;color:#262833;letter-spacing:0.269px;width:104.4px;overflow:hidden'>6894b677895c95a</div>
<div class='t' style='left:1145.3px;top:875.0px;font-size:13px;color:#2776ac;letter-spacing:0.182px;'>Machine &#x27;ip-10-0-1-121.ec2.internal&#x27; is deleted from &#x27;control-plane-pool&#x27; pool</div>
<div class='rl' style='top:896px'></div>
<svg class='hist' style='left:257px;top:905px' width='14' height='14' viewBox='0 0 14 14'><path d='M2.6 4.6 A5.2 5.2 0 1 1 2.3 8.6' fill='none' stroke='#8fbde3' stroke-width='1.3' stroke-linecap='round'/><path d='M1.4 2.6 L2.4 5.2 L5 4.6' fill='none' stroke='#8fbde3' stroke-width='1.3' stroke-linecap='round' stroke-linejoin='round'/><path d='M6.2 4.4 L7.4 7.4' stroke='#8fbde3' stroke-width='1' stroke-linecap='round'/></svg>
<div class='t' style='left:304.7px;top:905.0px;font-size:13px;color:#262833;letter-spacing:-0.554px;'>07 Aug 2025, 11:32</div>
<div class='t' style='left:453.7px;top:905.0px;font-size:13px;color:#262833;letter-spacing:0.629px;'>cluster-agent</div>
<div class='t' style='left:576.4px;top:905.0px;font-size:13px;color:#262833;letter-spacing:0.152px;'>Cluster</div>
<div class='t' style='left:908.6px;top:905.0px;font-size:13px;color:#262833;letter-spacing:0.269px;width:104.4px;overflow:hidden'>6894b677895c95a</div>
<div class='t' style='left:1145.3px;top:905.0px;font-size:13px;color:#2776ac;letter-spacing:0.285px;'>Machine &#x27;i-06ad884a7f173b79b&#x27; is added to &#x27;control-plane-pool&#x27; pool</div>

<!-- blurred overlays -->
<div class="b" style="left:686px;top:232px;width:139px;height:700px;background:linear-gradient(90deg,#f8f8fa 0%,#f4f4f7 14%,#f0f0f3 35%,#f1f1f4 60%,#f4f4f6 82%,#f8f8fa 100%)"></div>
<div class="b" style="left:686px;top:228px;width:139px;height:8px;background:linear-gradient(180deg,rgba(245,246,248,1),rgba(245,246,248,0))"></div>
<div class="b" style="left:1013px;top:233px;width:88px;height:700px;background:linear-gradient(90deg,#f0f0f3 0%,#efeff2 20%,#f2f2f5 55%,#f6f6f8 85%,#fafafb 100%)"></div>

<!-- highlight boxes -->
<div class="b" style="left:1137px;top:232px;width:278px;height:36px;border:3px solid #b9416b;border-radius:1.5px;box-shadow:0 0 2px rgba(235,130,170,0.35)"></div>
<div class="b" style="left:1138px;top:354px;width:267px;height:35px;border:3px solid #b9416b;border-radius:1.5px;box-shadow:0 0 2px rgba(235,130,170,0.35)"></div>
<div class="b" style="left:1138px;top:414px;width:273px;height:33px;border:3px solid #b9416b;border-radius:1.5px;box-shadow:0 0 2px rgba(235,130,170,0.35)"></div>

<!-- icons -->
<svg style="left:0;top:0;pointer-events:none" width="1906" height="930" viewBox="0 0 1906 930">
<!-- Palette logo -->
<g>
 <clipPath id="lg"><path d="M39.4,17.6 L55,25.5 L55,37.8 L40.8,45.2 L40.8,55.4 L38.8,56.5 L28.7,50.7 L28.7,23.4 Z"/></clipPath>
 <g clip-path="url(#lg)">
  <rect x="27" y="16" width="30" height="42" fill="#0c3b3a"/>
  <path d="M28,23 L39.5,17 L56,25.5 L56,30 L44.5,36 Z" fill="#7a4b86"/>
  <path d="M56,25.5 L56,38 L47,42 L44.5,36 Z" fill="#5a1e4c"/>
  <path d="M28,33 L39,27.8 L44.5,31.5 L28,40 Z" fill="#f4f0f6"/>
  <path d="M28,40 L44.5,31.5 L56,38 L40.8,45.5 L28,50 Z" fill="#1f7a71"/>
  <path d="M28,50 L40.8,44 L40.8,57 L28,51 Z" fill="#0e4743"/>
 </g>
 <path d="M39.4,17.6 L55,25.5 L55,37.8 L40.8,45.2 L40.8,55.4 L38.8,56.5 L28.7,50.7 L28.7,23.4 Z" fill="none" stroke="#ffffff" stroke-width="1.6" stroke-linejoin="round"/>
</g>
<!-- project overview -->
<g fill="none" stroke="#a3b8b5" stroke-width="1.1">
 <rect x="24.6" y="141.6" width="2.4" height="5.2" rx="1"/>
 <rect x="29.4" y="137.2" width="2.4" height="9.6" rx="1"/>
 <rect x="34.4" y="141.2" width="2.4" height="5.6" rx="1"/>
 <rect x="39.4" y="137.2" width="2.4" height="9.6" rx="1"/>
 <path d="M25.5,137.2 L30.5,132.2 L35.4,136 L40.6,132.2"/>
</g>
<g fill="#a3b8b5"><circle cx="25.5" cy="137.2" r="1.3"/><circle cx="30.5" cy="132.2" r="1.3"/><circle cx="35.4" cy="136" r="1.3"/><circle cx="40.6" cy="132.2" r="1.3"/></g>
<!-- profiles -->
<path d="M29.2,195 L36.8,195 L39.4,197.9 L36.8,200.8 L29.2,200.8 L26.6,197.9 Z" fill="#c9d3d2"/>
<g fill="none" stroke="#c3d3d0" stroke-width="1.5" stroke-linejoin="round">
 <path d="M26.6,201 L28.9,203.3 L37.1,203.3 L39.4,201"/>
 <path d="M26.6,204.6 L28.9,206.9 L37.1,206.9 L39.4,204.6"/>
 <path d="M26.6,208.2 L28.9,210.5 L37.1,210.5 L39.4,208.2"/>
</g>
<!-- clusters -->
<g fill="#91a8a5">
 <rect x="24.1" y="259.1" width="12" height="3" rx="0.6"/>
 <rect x="24.1" y="265.5" width="12" height="3.1" rx="0.6"/>
 <rect x="24.1" y="271.9" width="12" height="3" rx="0.6"/>
</g>
<g fill="none" stroke="#9fb4b1" stroke-width="1.1"><path d="M37.6,259.8 L40.9,259.8 L41.4,260.4 L41.4,273.8 L40.9,274.4 L37.6,274.4 M37.6,267 L41.4,267"/></g>
<!-- cluster groups -->
<g fill="none" stroke="#a3b8b5" stroke-width="1.1">
 <circle cx="33.3" cy="332.6" r="3.2"/>
 <circle cx="29.8" cy="324.8" r="1.7"/>
 <circle cx="41.1" cy="326.9" r="1.7"/>
 <circle cx="41.2" cy="337.3" r="1.7"/>
 <circle cx="24.8" cy="332.6" r="1.7"/>
 <path d="M30.6,326.4 L32,329.5 M39.6,327.9 L36,330.4 M39.8,336.2 L35.8,334.6 M26.5,332.6 L30,332.6"/>
</g>
<!-- workspaces -->
<g fill="none" stroke="#a3b8b5" stroke-width="1.1">
 <path d="M28.6,388 A8.6,8.6 0 0 1 41.3,398.8"/>
 <path d="M37.4,402.4 A8.6,8.6 0 0 1 25.1,391.3"/>
 <circle cx="33.1" cy="395" r="5.4"/>
 <circle cx="33.1" cy="395" r="2.6"/>
 <circle cx="26.9" cy="388.7" r="1.8"/>
</g>
<circle cx="39" cy="401" r="1.9" fill="#a3b8b5"/>
<!-- audit logs -->
<path d="M26.6,450 L35.5,450 L40.6,455 L40.6,467 Q40.6,468 39.6,468 L26.6,468 Q25.7,468 25.7,467 L25.7,451 Q25.7,450 26.6,450 Z" fill="#ffffff"/>
<g fill="none" stroke="#1d2e2e" stroke-width="1.6"><circle cx="32.9" cy="459.3" r="3.4"/><path d="M35.6,462 L40.3,466.7"/></g>
<!-- gear -->
<g transform="translate(32.9,522.9)">
 <path fill="#9db3b0" fill-rule="evenodd" d="M-1.3,-7.8 L1.3,-7.8 L1.7,-5.6 A5.8,5.8 0 0 1 3.3,-4.9 L5.1,-6.2 L6.9,-4.4 L5.6,-2.6 A5.8,5.8 0 0 1 6.2,-1 L8.0,-0.5 L8.0,2 L6.0,2.3 A5.8,5.8 0 0 1 5.3,3.9 L6.6,5.6 L4.8,7.4 L3.1,6.1 A5.8,5.8 0 0 1 1.5,6.8 L1.2,8 L-1.2,8 L-1.5,6.8 A5.8,5.8 0 0 1 -3.1,6.1 L-4.8,7.4 L-6.6,5.6 L-5.3,3.9 A5.8,5.8 0 0 1 -6,2.3 L-8,2 L-8,-0.5 L-6.2,-1 A5.8,5.8 0 0 1 -5.6,-2.6 L-6.9,-4.4 L-5.1,-6.2 L-3.3,-4.9 A5.8,5.8 0 0 1 -1.7,-5.6 Z M0,-2.1 A2.1,2.1 0 1 0 0.01,-2.1 Z"/>
</g>
<!-- tenant settings -->
<g fill="none" stroke="#9db3b0" stroke-width="1.25" stroke-linejoin="round" stroke-linecap="round">
 <g transform="translate(33.2,740) scale(0.86) rotate(45)">
  <rect x="-11.6" y="-2.3" width="6.6" height="4.6" rx="2.1"/>
  <path d="M-5,0 L0.4,0"/>
  <rect x="0.4" y="-2.6" width="10.6" height="5.2" rx="1.4"/>
 </g>
 <circle cx="26.7" cy="733.5" r="0.8" fill="#9db3b0" stroke="none"/>
 <g transform="translate(33.2,740) scale(0.86) rotate(-45)">
  <rect x="-12" y="-2.3" width="9.6" height="4.6" rx="2.2"/>
  <path d="M3.4,-2.2 A4.2,4.2 0 1 1 3.4,2.2"/>
  <path d="M11.3,-1.6 L8.8,-0.9 L8.8,0.9 L11.3,1.6"/>
 </g>
</g>
<!-- spectro logo -->
<path d="M26.5,892.2 L37.9,901.2 L26.5,908.5 L15.2,901 Z" fill="#1b5a55"/>
<path d="M26.5,904.5 L37.9,911.4 L26.5,920 L15.2,911 Z" fill="#15514a" opacity="0.95"/>
<path d="M21,904.8 L26.5,908.5 L32,905 L26.5,901.8 Z" fill="#0e3f3a"/>
<!-- collapse chevron -->
<path d="M185.2,900.6 L178.3,906.4 L185.2,912.3" fill="none" stroke="#b9c6c4" stroke-width="1.5"/>
<!-- default dropdown icon -->
<rect x="261.6" y="12.5" width="14.8" height="14.6" rx="1.3" fill="#ffffff" stroke="#6a6e76" stroke-width="1.3"/>
<path d="M265.4,19.2 L265.4,24.4" stroke="#5d6168" stroke-width="1.2" stroke-linecap="round"/>
<path d="M269,15.6 L269,24" stroke="#9a9ea4" stroke-width="1.6" stroke-linecap="round"/>
<path d="M272.5,21.2 L272.5,24.2" stroke="#5d6168" stroke-width="1.2" stroke-linecap="round"/>
<!-- chevrons -->
<g fill="none" stroke="#b7bac0" stroke-width="1.1">
 <path d="M468.2,16.6 L473,22.6 L477.8,16.6"/>
 <path d="M461.2,161.3 L466.2,167.8 L471.2,161.3"/>
 <path d="M740.2,161.3 L745,167.8 L749.8,161.3"/>
 <path d="M1008,161.3 L1013,167.8 L1018,161.3"/>
</g>
<!-- chat icon -->
<g fill="none" stroke="#4f5258" stroke-width="1.2" stroke-linejoin="round">
 <path d="M1567.8,22.6 Q1566,20.4 1566.3,17.6 Q1567,11.3 1573.5,11.2 Q1580,11.3 1580.2,17.2 Q1580,23 1573.5,23.2 Q1570.3,23.3 1569,22.8 L1566.4,24 Z"/>
 <path d="M1581.6,16.2 Q1588.4,17.2 1588.3,22.6 Q1588.1,24.8 1586.7,26.2 L1587.6,28.6 L1584.5,27.4 Q1583.2,28.2 1580.8,28.1 Q1576.6,28 1575.4,24.6"/>
</g>
<!-- compass -->
<g fill="none" stroke="#4f5258" stroke-width="1.3">
 <circle cx="1663.9" cy="19.8" r="8.6"/>
 <path d="M1659.6,23.8 L1661.8,18.3 L1668.2,15.9 L1666.1,21.3 Z" stroke-width="1.1" stroke-linejoin="round"/>
</g>
<circle cx="1663.9" cy="19.8" r="0.9" fill="#4f5258"/>
<!-- book -->
<g fill="none" stroke="#3a8ec6" stroke-width="1.2">
 <path d="M1692.6,25.6 L1692.6,14.6 Q1692.6,13.4 1693.8,13.4 L1702.6,13.4 Q1703.6,13.4 1703.6,14.6 L1703.6,23.4 L1694,23.4 Q1692.6,23.4 1692.6,24.8 Q1692.6,26.3 1694,26.3 L1703.8,26.3"/>
 <path d="M1695.2,13.6 L1695.2,23.2" stroke-width="1.4"/>
 <path d="M1697.3,16.8 L1701.5,16.8 M1697.3,19.4 L1701.5,19.4"/>
</g>
<!-- date arrow -->
<path d="M1709.2,81 L1720.8,81 L1717.8,79" fill="none" stroke="#b8babe" stroke-width="1"/>
<!-- calendar -->
<g fill="none" stroke="#bdbdbd" stroke-width="1">
 <rect x="1828.4" y="75.4" width="11.2" height="10.2"/>
 <path d="M1828.4,78.4 L1839.6,78.4 M1831.4,74 L1831.4,76.4 M1836.6,74 L1836.6,76.4"/>
</g>
<!-- csv icon -->
<g fill="none" stroke="#4e9a7c" stroke-width="1.1" stroke-linejoin="round">
 <path d="M1873.4,88.5 L1870.4,88.5 Q1869.4,88.5 1869.4,87.5 L1869.4,72.2 Q1869.4,71.2 1870.4,71.2 L1876.7,71.2 L1882.1,76.7 L1882.1,81.4"/>
 <path d="M1876.7,71.2 L1876.7,76.7 L1882.1,76.7"/>
</g>
<text x="1874" y="88.6" font-family="Liberation Mono" font-weight="700" font-size="7.4" fill="#4e9a7c" letter-spacing="-0.5">CSV</text>
</svg>

</body></html>
